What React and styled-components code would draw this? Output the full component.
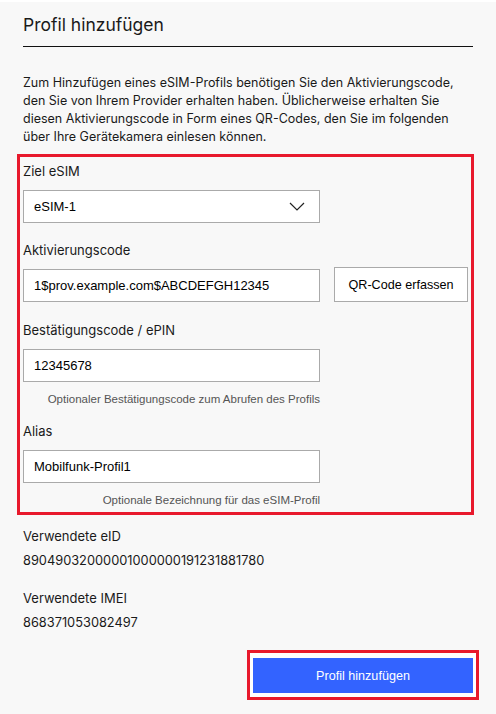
import React from 'react';
import styled, { createGlobalStyle } from 'styled-components';

const GlobalStyle = createGlobalStyle`
  html, body {
    margin: 0;
    padding: 0;
    background: #f8f8f8;
  }
  body {
    font-family: Inter, "Noto Sans", sans-serif;
    color: #1a1a1a;
  }
`;

const Page = styled.div`
  border-top: 2px solid #ffffff;
  padding: 12px 23px 0 23px;
  width: 450px;
  min-height: 700px;
`;

const Title = styled.h1`
  margin: 0;
  font-size: 17.5px;
  font-weight: 400;
  line-height: 22px;
  color: #1a1a1a;
  padding-bottom: 10px;
  border-bottom: 1px solid #111;
`;

const Intro = styled.p`
  margin: 27px 0 0 0;
  font-size: 12.5px;
  line-height: 18px;
  color: #1a1a1a;
`;

const FormGroup = styled.div`
  margin: 8px -1px 0 -6px;
  border: 3px solid #e8192c;
  padding: 6px 3px 5px 3px;
  display: flex;
  flex-direction: column;
`;

const Label = styled.div`
  font-size: 13px;
  line-height: 16px;
  margin-top: ${(p) => p.$top || 0}px;
  margin-bottom: 11px;
`;

const Row = styled.div`
  display: flex;
  align-items: center;
  gap: 14px;
`;

const Field = styled.div`
  width: 297px;
  height: 33px;
  box-sizing: border-box;
  border: 1px solid #aaaaaa;
  background: #ffffff;
  display: flex;
  align-items: center;
  justify-content: space-between;
  padding: 0 14px 0 10px;
  font-family: "Liberation Sans", Arial, sans-serif;
  font-size: 13px;
  color: #000;
`;

const Chevron = () => (
  <svg width="16" height="9" viewBox="0 0 16 9">
    <path d="M1 1 L8 8 L15 1" fill="none" stroke="#222" strokeWidth="1.2" />
  </svg>
);

const SecondaryButton = styled.button`
  width: 134px;
  height: 35px;
  margin-top: -2px;
  background: #ffffff;
  border: 1px solid #aaaaaa;
  font-family: "Liberation Sans", Arial, sans-serif;
  font-size: 12.6px;
  color: #000;
  padding: 0;
`;

const Hint = styled.div`
  width: 297px;
  text-align: right;
  font-family: "Liberation Sans", Arial, sans-serif;
  font-size: 11.5px;
  line-height: 14px;
  color: #555;
  margin-top: 10px;
`;

const InfoLabel = styled.div`
  font-size: 13px;
  line-height: 16px;
  margin-top: ${(p) => p.$top}px;
`;

const InfoValue = styled.div`
  font-size: 12.8px;
  line-height: 16px;
  margin-top: 9px;
`;

const Actions = styled.div`
  display: flex;
  justify-content: flex-end;
  margin: 19px -6px 0 0;
`;

const Highlight = styled.div`
  border: 3px solid #e8192c;
  padding: 5px 3px 4px 3px;
  background: #ffffff;
`;

const PrimaryButton = styled.button`
  width: 220px;
  height: 35px;
  border: none;
  background: #3363ff;
  color: #ffffff;
  font-family: "Liberation Sans", Arial, sans-serif;
  font-size: 12.6px;
  padding: 0;
  display: block;
`;

export default function App() {
  return (
    <>
      <GlobalStyle />
      <Page>
        <Title>Profil hinzufügen</Title>
        <Intro>
          Zum Hinzufügen eines eSIM-Profils benötigen Sie den Aktivierungscode,
          den Sie von Ihrem Provider erhalten haben. Üblicherweise erhalten Sie
          diesen Aktivierungscode in Form eines QR-Codes, den Sie im folgenden
          über Ihre Gerätekamera einlesen können.
        </Intro>

        <FormGroup>
          <Label>Ziel eSIM</Label>
          <Field>
            <span>eSIM-1</span>
            <Chevron />
          </Field>

          <Label $top={19}>Aktivierungscode</Label>
          <Row>
            <Field>1$prov.example.com$ABCDEFGH12345</Field>
            <SecondaryButton>QR-Code erfassen</SecondaryButton>
          </Row>

          <Label $top={20}>Bestätigungscode / ePIN</Label>
          <Field>12345678</Field>
          <Hint>Optionaler Bestätigungscode zum Abrufen des Profils</Hint>

          <Label $top={17}>Alias</Label>
          <Field>Mobilfunk-Profil1</Field>
          <Hint>Optionale Bezeichnung für das eSIM-Profil</Hint>
        </FormGroup>

        <InfoLabel $top={13}>Verwendete eID</InfoLabel>
        <InfoValue>89049032000001000000191231881780</InfoValue>
        <InfoLabel $top={21}>Verwendete IMEI</InfoLabel>
        <InfoValue>868371053082497</InfoValue>

        <Actions>
          <Highlight>
            <PrimaryButton>Profil hinzufügen</PrimaryButton>
          </Highlight>
        </Actions>
      </Page>
    </>
  );
}
